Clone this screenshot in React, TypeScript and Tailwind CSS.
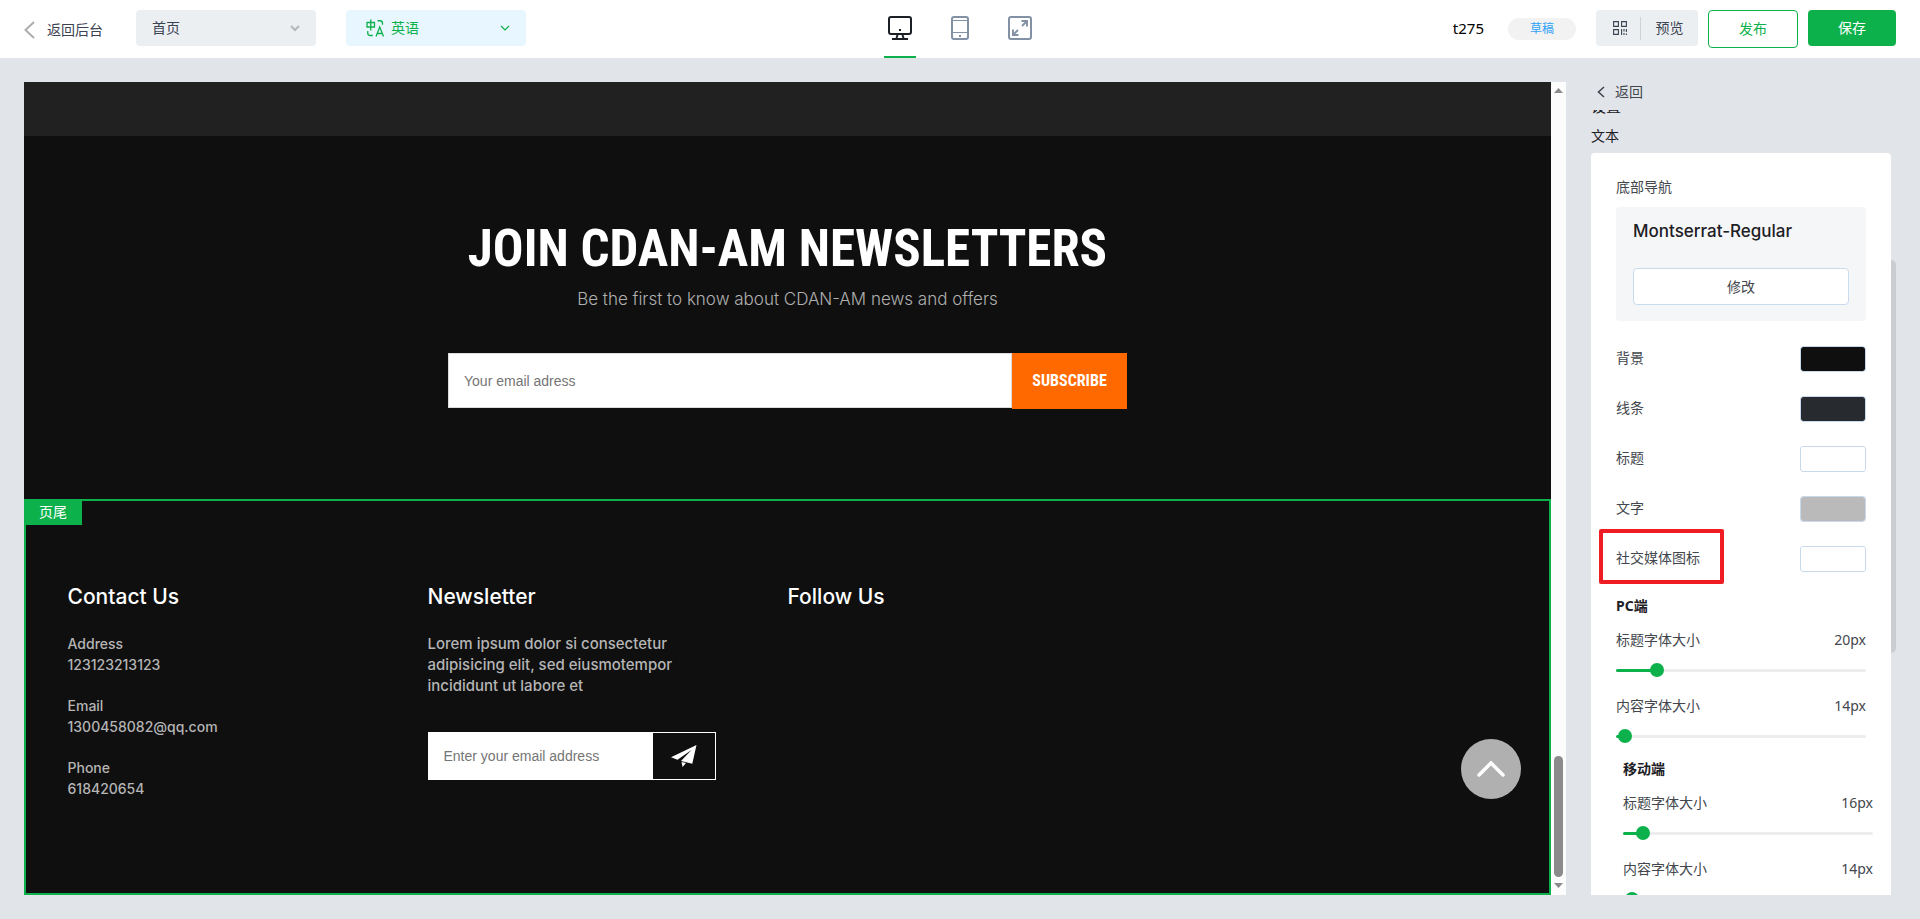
import { useState } from "react";
import type { ReactNode } from "react";
import clsx from "clsx";

const DEVICES = ["desktop", "tablet", "full"] as const;
type Device = (typeof DEVICES)[number];

const DEVICE_LABELS: Record<Device, string> = {
    desktop: "桌面",
    tablet: "平板",
    full: "全屏",
};

const COLORS = [
    { id: "background", label: "背景", value: "#0f0f0f" },
    { id: "line", label: "线条", value: "#272b30" },
    { id: "title", label: "标题", value: "#ffffff" },
    { id: "text", label: "文字", value: "#bababa" },
    { id: "social", label: "社交媒体图标", value: "#ffffff", marked: true },
];

const CONTACTS = [
    { label: "Address", value: "123123213123" },
    { label: "Email", value: "1300458082@qq.com" },
    { label: "Phone", value: "618420654" },
];

const MIN_SIZE = 12;
const MAX_SIZE = 60;

interface ChevronProps {
    className?: string;
    d: string;
    viewBox: string;
    strokeWidth?: number;
}

function Chevron({ className, d, viewBox, strokeWidth = 2 }: ChevronProps) {
    return (
        <svg className={className} viewBox={viewBox} fill="none" stroke="currentColor" strokeWidth={strokeWidth} aria-hidden="true">
            <path d={d} />
        </svg>
    );
}

function DeviceIcon({ device }: { device: Device }) {
    if (device === "desktop") {
        return (
            <svg className="size-6" viewBox="0 0 24 24" fill="none" stroke="currentColor" strokeWidth="2" aria-hidden="true">
                <rect x="1" y="1" width="22" height="17" rx="2" />
                <path d="M9.500 19l-1 3M14.500 19l1 3M4 23h16" />
                <path d="M11 14h2" />
            </svg>
        );
    }
    if (device === "tablet") {
        return (
            <svg className="size-6" viewBox="0 0 24 24" fill="none" stroke="currentColor" aria-hidden="true">
                <rect x="4" y="1" width="16" height="22" rx="2" strokeWidth="2" />
                <path d="M4 4.500h16M4 16.500h16" />
                <path d="M11 20h2" strokeWidth="2" />
            </svg>
        );
    }
    return (
        <svg className="size-6" viewBox="0 0 24 24" fill="none" stroke="currentColor" strokeWidth="2" aria-hidden="true">
            <rect x="1" y="1" width="22" height="22" rx="2" />
            <path d="M13.500 5h5.500v5.500M18.500 5.500l-4.500 4.500M5 13.500v5.500h5.500M5.500 18.500l4.500-4.500" strokeWidth="1.900" />
        </svg>
    );
}

function TranslateIcon({ className }: { className?: string }) {
    return (
        <svg className={className} viewBox="0 0 18 18" fill="none" stroke="currentColor" strokeWidth="1.300" aria-hidden="true">
            <path d="M1 3.500h7.500v4.500H1zM4.750 0.500v11" />
            <path d="M11.500 1.750h2.500a2.500 2.500 0 0 1 2.500 2.500v1.500M1.750 12v2a2.500 2.500 0 0 0 2.500 2.500h2.500" />
            <path d="M10 17.500l3.750-9.500 3.750 9.500M11.250 14.500h5" />
        </svg>
    );
}

function QrIcon({ className }: { className?: string }) {
    return (
        <svg className={className} viewBox="0 0 14 14" fill="none" stroke="currentColor" strokeWidth="1.100" aria-hidden="true">
            <path d="M.6.6h4.800v4.800H.6zM8.600.6h4.800v4.800H8.600zM.6 8.600h4.800v4.800H.6z" />
            <path d="M8.600 8v6M11 8v2.500M11 12v2M13.400 8v3M13.400 12.500v1.500" />
        </svg>
    );
}

function PaperPlane({ className }: { className?: string }) {
    return (
        <svg className={className} viewBox="0 0 26 22" fill="currentColor" aria-hidden="true">
            <path d="M25.500 0 L0 12.200 L6.500 14.800 L20.500 5 L10 16 L21.300 18.800 Z" />
            <path d="M10.500 17 L15 18 L11.600 22 Z" />
        </svg>
    );
}

interface FontSliderProps {
    id: string;
    label: string;
    initial: number;
}

function FontSlider({ id, label, initial }: FontSliderProps) {
    const [size, setSize] = useState(initial);
    const percent = ((size - MIN_SIZE) / (MAX_SIZE - MIN_SIZE)) * 100;

    return (
        <div>
            <div className="flex h-5 items-center justify-between">
                <label htmlFor={id}>{label}</label>
                <output htmlFor={id}>{size}px</output>
            </div>
            <div className="relative mt-[13px] flex h-3.5 items-center">
                <div className="h-[3px] w-full rounded-full bg-[#ededed]">
                    <div className="h-full rounded-full bg-[#0db14b]" style={{ width: `${percent}%` }}></div>
                </div>
                <input
                    id={id}
                    type="range"
                    min={MIN_SIZE}
                    max={MAX_SIZE}
                    value={size}
                    onChange={(e) => setSize(Number(e.target.value))}
                    className="absolute inset-y-0 -left-2 w-[calc(100%+14px)] cursor-pointer appearance-none bg-transparent [&::-webkit-slider-thumb]:size-3.5 [&::-webkit-slider-thumb]:appearance-none [&::-webkit-slider-thumb]:rounded-full [&::-webkit-slider-thumb]:bg-[#0db14b]"
                />
            </div>
        </div>
    );
}

function Header() {
    const [device, setDevice] = useState<Device>("desktop");

    return (
        <header className="flex h-[58px] shrink-0 items-start bg-white px-6 text-sm text-[#3b4252]">
            <div className="flex flex-1 items-start pt-2.5">
                <a href="#" className="flex h-10 items-center gap-3">
                    <Chevron className="h-[18px] w-[11px] text-[#adadad]" viewBox="0 0 11 18" d="M10 1L1.500 9l8.500 8" />
                    返回后台
                </a>
                <div className="relative ml-[33px]">
                    <select aria-label="页面" className="h-9 w-[180px] appearance-none rounded bg-[#ebeff2] px-4 outline-none">
                        <option>首页</option>
                    </select>
                    <Chevron className="pointer-events-none absolute top-[15px] right-4 h-[7px] w-[10px] text-[#b4b7ba]" viewBox="0 0 10 7" d="M1 1l4 4 4-4" />
                </div>
                <div className="relative ml-[30px] text-[#0db14b]">
                    <select aria-label="语言" className="h-9 w-[180px] appearance-none rounded bg-[#e8f6ff] pr-4 pl-[45px] outline-none">
                        <option>英语</option>
                    </select>
                    <TranslateIcon className="pointer-events-none absolute top-[9px] left-5 size-[18px]" />
                    <Chevron className="pointer-events-none absolute top-[15px] right-4 h-[7px] w-[10px]" viewBox="0 0 10 7" d="M1 1l4 4 4-4" strokeWidth={1.2} />
                </div>
            </div>

            <div className="flex gap-7">
                {DEVICES.map((item) => (
                    <button
                        key={item}
                        aria-label={DEVICE_LABELS[item]}
                        onClick={() => setDevice(item)}
                        className={clsx(
                            "flex h-[58px] w-8 cursor-pointer items-start justify-center border-b-2 pt-4",
                            item === device ? "border-[#0db14b] text-[#1b1f26]" : "border-transparent text-[#8391a5]"
                        )}
                    >
                        <DeviceIcon device={item} />
                    </button>
                ))}
            </div>

            <div className="flex flex-1 items-start justify-end gap-2.5 pt-2.5">
                <div className="mr-2.5 flex h-[38px] items-center gap-6">
                    <span className="text-[15px] text-black">t275</span>
                    <span className="flex h-[22px] w-[68px] items-center justify-center rounded-full bg-[#f2f2f3] text-xs text-[#2ea3f7]">草稿</span>
                </div>
                <div className="flex h-9 items-center rounded bg-[#ebeff2]">
                    <button aria-label="二维码" className="flex h-9 w-11 cursor-pointer items-center justify-center pl-[17px] pr-[13px]">
                        <QrIcon className="size-3.5 shrink-0" />
                    </button>
                    <span className="h-[23px] w-px bg-[#cfd3d7]"></span>
                    <button className="h-9 w-[57px] cursor-pointer">预览</button>
                </div>
                <button className="h-[38px] w-[90px] cursor-pointer rounded border border-[#0db14b] text-[#0db14b]">发布</button>
                <button className="h-9 w-[88px] cursor-pointer rounded bg-[#0db14b] text-white">保存</button>
            </div>
        </header>
    );
}

function Newsletter() {
    return (
        <section className="h-[363px] shrink-0 px-10 pt-[83px] text-center">
            <h1 className="font-['Roboto_Condensed','Roboto',sans-serif] text-[51px] leading-[60px] font-bold text-white">
                JOIN CDAN-AM NEWSLETTERS
            </h1>
            <p className="mt-2 text-[17px] leading-6 font-light text-[#b0b0b0]">
                Be the first to know about CDAN-AM news and offers
            </p>
            <form className="mx-auto mt-[42px] flex max-w-[679px] items-start" onSubmit={(e) => e.preventDefault()}>
                <input
                    type="email"
                    aria-label="Your email adress"
                    placeholder="Your email adress"
                    className="h-[55px] min-w-0 flex-1 border border-[#dcdcdc] bg-white px-[15px] font-['Liberation_Sans',sans-serif] text-sm text-black outline-none placeholder:text-[#757575]"
                />
                <button className="h-14 w-[115px] cursor-pointer bg-[#ff6900] font-['Roboto_Condensed','Roboto',sans-serif] text-base font-bold text-white">
                    SUBSCRIBE
                </button>
            </form>
        </section>
    );
}

function FooterColumn({ title, children }: { title: string; children?: ReactNode }) {
    return (
        <div>
            <h2 className="text-[21px] leading-7 font-medium text-white">{title}</h2>
            <div className="mt-[22px]">{children}</div>
        </div>
    );
}

function SiteFooter() {
    return (
        <footer className="relative flex-1 border-2 border-[#0db14b] pt-[82px] text-sm leading-[21px] font-medium text-[#b5b5b5]">
            <span className="absolute -top-0.5 -left-0.5 flex h-[26px] w-[58px] items-center justify-center bg-[#0db14b] pb-0.5 font-['Noto_Sans','Noto_Sans_CJK_SC',sans-serif] font-normal text-white">
                页尾
            </span>
            <div className="mx-auto grid max-w-[1440px] grid-cols-4">
                <FooterColumn title="Contact Us">
                    <dl className="flex flex-col gap-5">
                        {CONTACTS.map((item) => (
                            <div key={item.label}>
                                <dt>{item.label}</dt>
                                <dd>{item.value}</dd>
                            </div>
                        ))}
                    </dl>
                </FooterColumn>
                <FooterColumn title="Newsletter">
                    <p className="max-w-[260px] text-[15px] leading-[21px]">Lorem ipsum dolor si consectetur adipisicing elit, sed eiusmotempor incididunt ut labore et</p>
                    <form className="mt-9 flex h-12 max-w-72 border border-white" onSubmit={(e) => e.preventDefault()}>
                        <input
                            type="email"
                            aria-label="Enter your email address"
                            placeholder="Enter your email address"
                            className="min-w-0 flex-1 bg-white px-[15px] font-['Liberation_Sans',sans-serif] text-sm font-normal text-black outline-none placeholder:text-[#757575]"
                        />
                        <button aria-label="Send" className="flex w-[62px] cursor-pointer items-center justify-center text-white">
                            <PaperPlane className="h-[22px] w-[26px]" />
                        </button>
                    </form>
                </FooterColumn>
                <FooterColumn title="Follow Us" />
            </div>
        </footer>
    );
}

function Preview() {
    return (
        <div className="flex min-w-0 flex-1">
            <div className="relative flex min-w-0 flex-1 flex-col overflow-hidden bg-[#0f0f0f] font-['Inter',sans-serif]">
                <div className="h-[54px] shrink-0 bg-[#212121]"></div>
                <Newsletter />
                <SiteFooter />
                <button aria-label="Back to top" className="absolute right-[30px] bottom-24 flex size-[60px] cursor-pointer items-center justify-center rounded-full bg-[#b0b0b0] text-white">
                    <svg className="h-4 w-7" viewBox="0 0 28 16" fill="none" stroke="currentColor" strokeWidth="3.500" strokeLinecap="round" aria-hidden="true">
                        <path d="M2 14L14 2l12 12" />
                    </svg>
                </button>
            </div>
            {/* Scrollbar */}
            <div className="flex w-[15px] flex-col items-center justify-between bg-[#fcfcfc] pt-1.5 pb-[7px] text-[#8b8b8b]">
                <svg className="h-[5px] w-[9px]" viewBox="0 0 9 5" fill="currentColor" aria-hidden="true"><path d="M0 5L4.500 0 9 5z" /></svg>
                <div className="flex flex-col items-center gap-1.5">
                    <div className="h-[121px] w-[9px] rounded-full bg-[#8b8b8b]"></div>
                    <svg className="h-[5px] w-[9px]" viewBox="0 0 9 5" fill="currentColor" aria-hidden="true"><path d="M0 0L4.500 5 9 0z" /></svg>
                </div>
            </div>
        </div>
    );
}

function Settings() {
    return (
        <aside className="flex w-[305px] shrink-0 flex-col text-sm text-[#43474d]">
            <a href="#" className="flex h-5 shrink-0 items-center gap-2.5 pl-1.5">
                <Chevron className="h-3 w-2" viewBox="0 0 8 12" d="M7 1L1.500 6 7 11" strokeWidth={1.6} />
                返回
            </a>
            <div className="mt-2 flex min-h-0 flex-1">
                <div className="flex min-w-0 flex-1 flex-col overflow-hidden">
                    {/* Section title that is scrolled nearly out of view */}
                    <div className="flex h-[5px] shrink-0 items-end overflow-hidden text-[15px] leading-[18px] text-[#1d2025]">设置</div>
                    <h2 className="mt-[11px] h-5 shrink-0 leading-5 text-[#1d2025]">文本</h2>
                    <div className="mt-[7px] min-h-0 flex-1 overflow-hidden rounded-t bg-white px-[25px] pt-6">
                        <h3 className="leading-5">底部导航</h3>
                        <div className="mt-2.5 rounded bg-[#f5f6f8] px-[17px] pt-3 pb-4">
                            <p className="font-['Inter',sans-serif] text-[17px] leading-6 font-medium text-[#1d2025]">Montserrat-Regular</p>
                            <button className="mt-[25px] h-[37px] w-full cursor-pointer rounded border border-[#c9dcee] bg-white">修改</button>
                        </div>

                        <div className="mt-[13px]">
                            {COLORS.map((color) => (
                                <div key={color.id} className="relative flex h-[50px] items-center justify-between">
                                    <label htmlFor={color.id} className="pb-0.5">{color.label}</label>
                                    {color.marked && (
                                        <span className="pointer-events-none absolute top-[-5px] -left-[17px] h-[55px] w-[125px] rounded-xs border-4 border-[#f01c24]"></span>
                                    )}
                                    <input
                                        id={color.id}
                                        type="color"
                                        defaultValue={color.value}
                                        className="h-[26px] w-[66px] cursor-pointer appearance-none rounded-[3px] border border-[#c8d9ec] bg-white [&::-webkit-color-swatch]:rounded-xs [&::-webkit-color-swatch]:border-0 [&::-webkit-color-swatch-wrapper]:p-0"
                                    />
                                </div>
                            ))}
                        </div>

                        <h4 className="mt-3 leading-5 font-bold text-[#1d2025]">PC端</h4>
                        <div className="mt-3.5 flex flex-col gap-[19px]">
                            <FontSlider id="pc-title" label="标题字体大小" initial={20} />
                            <FontSlider id="pc-content" label="内容字体大小" initial={14} />
                        </div>

                        <div className="-mr-[7px] ml-[7px]">
                            <h4 className="mt-4 leading-5 font-bold text-[#1d2025]">移动端</h4>
                            <div className="mt-3.5 flex flex-col gap-[19px]">
                                <FontSlider id="mobile-title" label="标题字体大小" initial={16} />
                                <FontSlider id="mobile-content" label="内容字体大小" initial={14} />
                            </div>
                        </div>
                    </div>
                </div>
                <div className="mt-[150px] h-[393px] w-[5px] rounded-r-full bg-[#caced3]"></div>
            </div>
        </aside>
    );
}

export default function App() {
    return (
        <div className="flex h-screen flex-col overflow-hidden bg-[#e1e5ea] font-['Noto_Sans','Noto_Sans_CJK_SC',sans-serif]">
            <Header />
            <main className="flex min-h-0 flex-1 gap-[25px] p-6">
                <Preview />
                <Settings />
            </main>
        </div>
    );
}
